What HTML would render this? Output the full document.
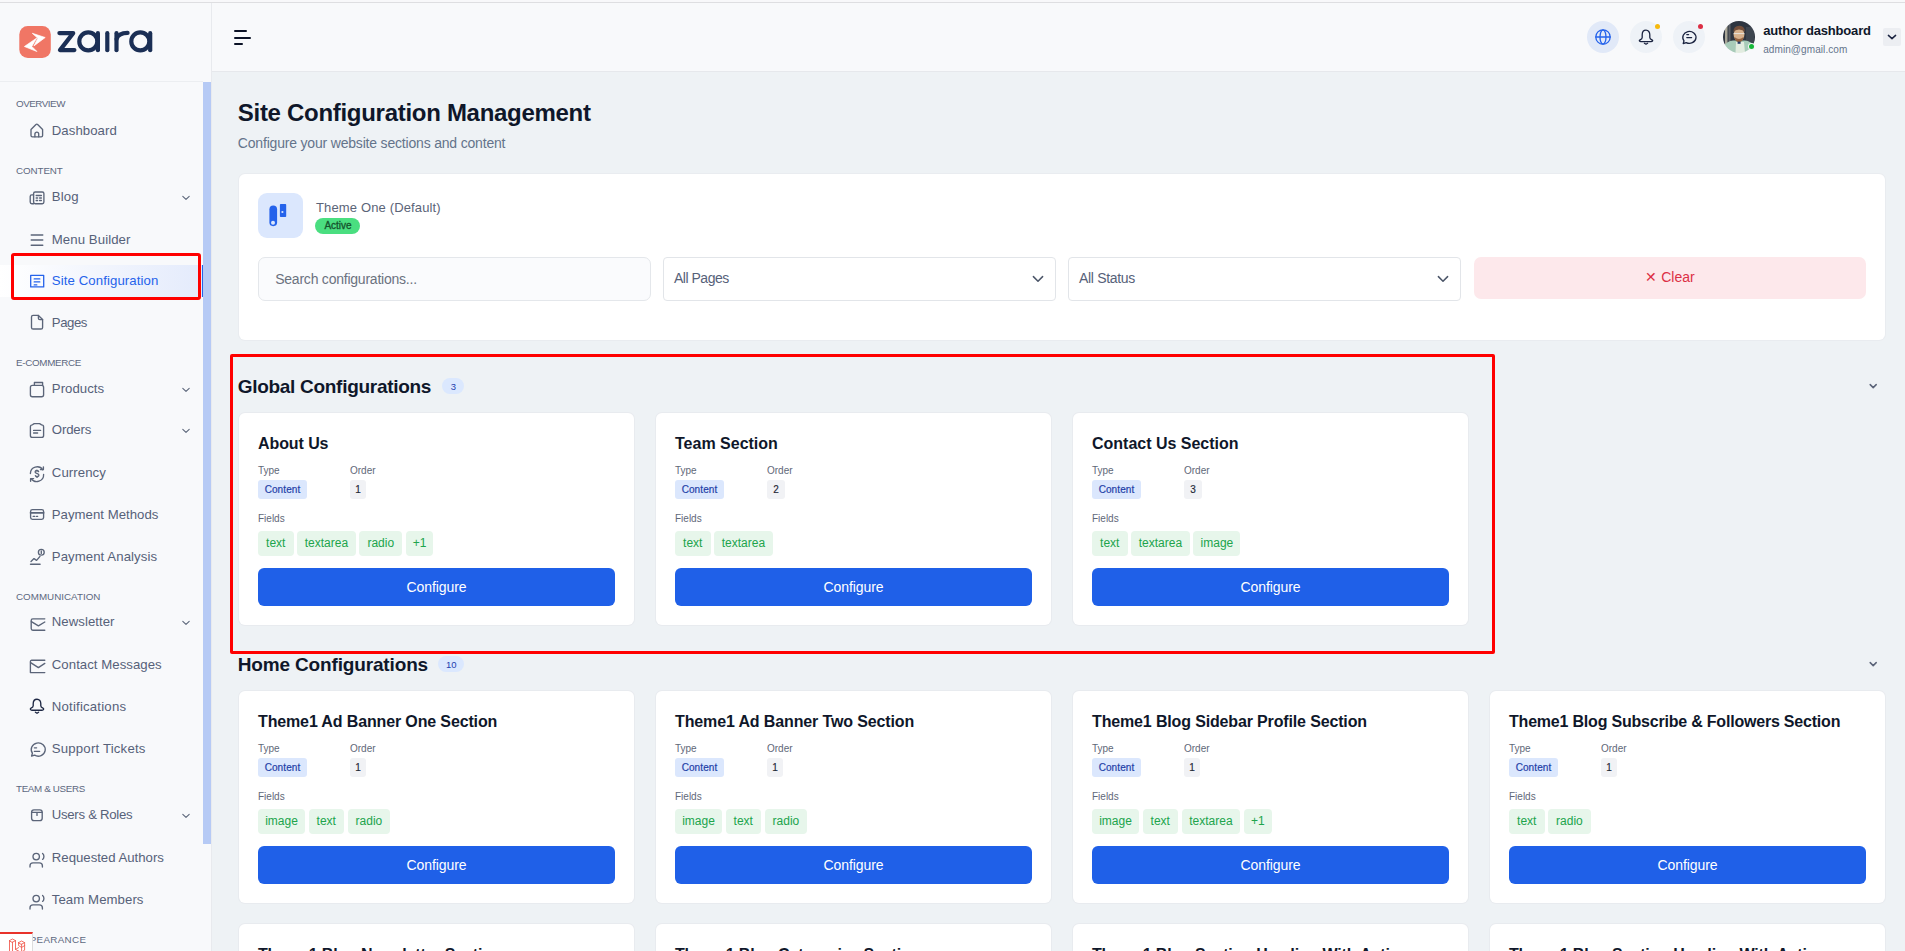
<!DOCTYPE html>
<html><head><meta charset="utf-8"><title>Site Configuration Management</title>
<style>
html,body{margin:0;padding:0;}
body{width:1905px;height:951px;overflow:hidden;position:relative;background:#eef2f5;font-family:"Liberation Sans", sans-serif;}
</style></head><body>
<div style="position:absolute;left:0px;top:0px;width:1905px;height:2px;background:#f8f8fa"></div>
<div style="position:absolute;left:0px;top:2px;width:1905px;height:1px;background:#dedee1"></div>
<div style="position:absolute;left:0px;top:3px;width:211px;height:948px;background:#f8f9fb"></div>
<div style="position:absolute;left:211px;top:3px;width:1px;height:948px;background:#e8eaee"></div>
<div style="position:absolute;left:0px;top:81px;width:203px;height:1px;background:#eceef1"></div>
<div style="position:absolute;left:203px;top:82px;width:8px;height:762px;background:#b6caf5"></div>
<svg style="position:absolute;left:0;top:0" width="170" height="81" viewBox="0 0 170 81">
<rect x="19.3" y="26" width="31.5" height="31.9" rx="8.5" fill="#f07665"/>
<g fill="#fff" stroke="#fff" stroke-width="0.7" stroke-linejoin="round"><path d="M32.3 33.3 L45.2 37.5 L33.9 45.9 L37.8 38.3 Z"/><path d="M36.7 38.1 L24.4 46.5 L36.9 51.5 L31.8 46.4 Z"/></g>
<g fill="none" stroke="#1b2f55" stroke-width="4.2" stroke-linecap="round" stroke-linejoin="round">
<path d="M59.4 33.1 H73.2 L60 50.1 H74.4"/>
<circle cx="88.3" cy="41.4" r="9.0"/>
<path d="M97.9 33.2 V50.2"/>
<path d="M107.3 33.2 V50.2"/>
<path d="M116.5 50.2 V33.2"/>
<path d="M116.6 39 Q118.4 32.9 127.6 32.9"/>
<circle cx="140.3" cy="41.4" r="9.0"/>
<path d="M150.2 33.2 V50.2"/>
</g></svg>
<div style="position:absolute;top:99.0px;font-size:9.8px;line-height:1;font-weight:400;color:#5d6880;white-space:nowrap;letter-spacing:-0.457px;left:16px;">OVERVIEW</div>
<div style="position:absolute;top:166.0px;font-size:9.8px;line-height:1;font-weight:400;color:#5d6880;white-space:nowrap;letter-spacing:-0.083px;left:16px;">CONTENT</div>
<div style="position:absolute;top:358.0px;font-size:9.8px;line-height:1;font-weight:400;color:#5d6880;white-space:nowrap;letter-spacing:-0.3px;left:16px;">E-COMMERCE</div>
<div style="position:absolute;top:592.0px;font-size:9.8px;line-height:1;font-weight:400;color:#5d6880;white-space:nowrap;letter-spacing:0.017px;left:16px;">COMMUNICATION</div>
<div style="position:absolute;top:784.0px;font-size:9.8px;line-height:1;font-weight:400;color:#5d6880;white-space:nowrap;letter-spacing:-0.336px;left:16px;">TEAM &amp; USERS</div>
<div style="position:absolute;top:935.0px;font-size:9.8px;line-height:1;font-weight:400;color:#5d6880;white-space:nowrap;letter-spacing:0.333px;left:16px;">APPEARANCE</div>
<div style="position:absolute;left:0px;top:265px;width:202px;height:32px;background:linear-gradient(90deg,#ffffff 0%,#f3f6fd 45%,#e4ebfc 100%)"></div>
<div style="position:absolute;left:202px;top:265px;width:1px;height:32px;background:#2563eb"></div>
<div style="position:absolute;top:124.0px;font-size:13.2px;line-height:1;font-weight:400;color:#566179;white-space:nowrap;letter-spacing:0.05px;left:51.8px;">Dashboard</div>
<div style="position:absolute;top:190.0px;font-size:13.2px;line-height:1;font-weight:400;color:#566179;white-space:nowrap;letter-spacing:0.1px;left:51.8px;">Blog</div>
<svg style="position:absolute;left:180px;top:195px;overflow:visible" width="12" height="8" viewBox="0 0 12 8"><g fill="none" stroke="#5b6579" stroke-width="1.1" stroke-linecap="round" stroke-linejoin="round"><path d="M2.8 1.4 L6 4.4 L9.2 1.4"/></g></svg>
<div style="position:absolute;top:233.0px;font-size:13.2px;line-height:1;font-weight:400;color:#566179;white-space:nowrap;letter-spacing:0.082px;left:51.8px;">Menu Builder</div>
<div style="position:absolute;top:274.0px;font-size:13.2px;line-height:1;font-weight:400;color:#2563eb;white-space:nowrap;letter-spacing:0.1px;left:51.8px;">Site Configuration</div>
<div style="position:absolute;top:316.0px;font-size:13.2px;line-height:1;font-weight:400;color:#566179;white-space:nowrap;letter-spacing:-0.45px;left:51.8px;">Pages</div>
<div style="position:absolute;top:382.0px;font-size:13.2px;line-height:1;font-weight:400;color:#566179;white-space:nowrap;letter-spacing:0.043px;left:51.8px;">Products</div>
<svg style="position:absolute;left:180px;top:387px;overflow:visible" width="12" height="8" viewBox="0 0 12 8"><g fill="none" stroke="#5b6579" stroke-width="1.1" stroke-linecap="round" stroke-linejoin="round"><path d="M2.8 1.4 L6 4.4 L9.2 1.4"/></g></svg>
<div style="position:absolute;top:423.0px;font-size:13.2px;line-height:1;font-weight:400;color:#566179;white-space:nowrap;letter-spacing:-0.16px;left:51.8px;">Orders</div>
<svg style="position:absolute;left:180px;top:428px;overflow:visible" width="12" height="8" viewBox="0 0 12 8"><g fill="none" stroke="#5b6579" stroke-width="1.1" stroke-linecap="round" stroke-linejoin="round"><path d="M2.8 1.4 L6 4.4 L9.2 1.4"/></g></svg>
<div style="position:absolute;top:466.0px;font-size:13.2px;line-height:1;font-weight:400;color:#566179;white-space:nowrap;letter-spacing:0.071px;left:51.8px;">Currency</div>
<div style="position:absolute;top:508.0px;font-size:13.2px;line-height:1;font-weight:400;color:#566179;white-space:nowrap;letter-spacing:0.021px;left:51.8px;">Payment Methods</div>
<div style="position:absolute;top:550.0px;font-size:13.2px;line-height:1;font-weight:400;color:#566179;white-space:nowrap;letter-spacing:0.073px;left:51.8px;">Payment Analysis</div>
<div style="position:absolute;top:615.0px;font-size:13.2px;line-height:1;font-weight:400;color:#566179;white-space:nowrap;letter-spacing:0.044px;left:51.8px;">Newsletter</div>
<svg style="position:absolute;left:180px;top:620px;overflow:visible" width="12" height="8" viewBox="0 0 12 8"><g fill="none" stroke="#5b6579" stroke-width="1.1" stroke-linecap="round" stroke-linejoin="round"><path d="M2.8 1.4 L6 4.4 L9.2 1.4"/></g></svg>
<div style="position:absolute;top:658.0px;font-size:13.2px;line-height:1;font-weight:400;color:#566179;white-space:nowrap;letter-spacing:0.047px;left:51.8px;">Contact Messages</div>
<div style="position:absolute;top:700.0px;font-size:13.2px;line-height:1;font-weight:400;color:#566179;white-space:nowrap;letter-spacing:0.2px;left:51.8px;">Notifications</div>
<div style="position:absolute;top:742.0px;font-size:13.2px;line-height:1;font-weight:400;color:#566179;white-space:nowrap;letter-spacing:0.193px;left:51.8px;">Support Tickets</div>
<div style="position:absolute;top:808.0px;font-size:13.2px;line-height:1;font-weight:400;color:#566179;white-space:nowrap;letter-spacing:-0.292px;left:51.8px;">Users &amp; Roles</div>
<svg style="position:absolute;left:180px;top:813px;overflow:visible" width="12" height="8" viewBox="0 0 12 8"><g fill="none" stroke="#5b6579" stroke-width="1.1" stroke-linecap="round" stroke-linejoin="round"><path d="M2.8 1.4 L6 4.4 L9.2 1.4"/></g></svg>
<div style="position:absolute;top:851.0px;font-size:13.2px;line-height:1;font-weight:400;color:#566179;white-space:nowrap;letter-spacing:-0.006px;left:51.8px;">Requested Authors</div>
<div style="position:absolute;top:893.0px;font-size:13.2px;line-height:1;font-weight:400;color:#566179;white-space:nowrap;letter-spacing:0.073px;left:51.8px;">Team Members</div>
<svg style="position:absolute;left:26px;top:119px;overflow:visible" width="22" height="22" viewBox="0 0 22 22"><g fill="none" stroke="#5b6579" stroke-width="1.35" stroke-linecap="round" stroke-linejoin="round"><path d="M5 10.4 L9.7 5.7 Q10.8 4.6 11.9 5.7 L16.6 10.4 V16.4 A1.4 1.4 0 0 1 15.2 17.8 H6.4 A1.4 1.4 0 0 1 5 16.4 Z"/><path d="M8.9 17.8 V15 A1.9 1.9 0 0 1 12.7 15 V17.8"/></g></svg>
<svg style="position:absolute;left:26px;top:185px;overflow:visible" width="22" height="22" viewBox="0 0 22 22"><g fill="none" stroke="#5b6579" stroke-width="1.35" stroke-linecap="round" stroke-linejoin="round"><rect x="7.6" y="7" width="10.3" height="11.7" rx="1.6"/><path d="M7.6 18.7 H5.8 A1.6 1.6 0 0 1 4.2 17.1 V11.4 A1.6 1.6 0 0 1 5.8 9.8 H7.6"/><path d="M10.2 10.5 H15.4 M10.2 13 H11.6 M13.6 13 H15.4 M10.2 15.5 H11.6 M13.6 15.5 H15.4"/></g></svg>
<svg style="position:absolute;left:26px;top:228px;overflow:visible" width="22" height="22" viewBox="0 0 22 22"><g fill="none" stroke="#5b6579" stroke-width="1.35" stroke-linecap="round" stroke-linejoin="round"><path d="M5.2 7 H16.8 M5.2 12 H16.8 M5.2 17.2 H16.8"/></g></svg>
<svg style="position:absolute;left:26px;top:269px;overflow:visible" width="22" height="22" viewBox="0 0 22 22"><g fill="none" stroke="#2563eb" stroke-width="1.3" stroke-linecap="round" stroke-linejoin="round"><rect x="4.7" y="6.3" width="13" height="11.6"/><path d="M8.2 9.9 H13.8 M8.2 12.9 H13.8 M8.2 15.9 H10.8"/></g></svg>
<svg style="position:absolute;left:26px;top:311px;overflow:visible" width="22" height="22" viewBox="0 0 22 22"><g fill="none" stroke="#5b6579" stroke-width="1.35" stroke-linecap="round" stroke-linejoin="round"><path d="M7.1 4.4 H12.4 L16.6 8.6 V16.4 A1.6 1.6 0 0 1 15 18 H7.1 A1.6 1.6 0 0 1 5.5 16.4 V6 A1.6 1.6 0 0 1 7.1 4.4 Z"/><path d="M12.4 4.4 V7.2 A1.4 1.4 0 0 0 13.8 8.6 H16.6"/></g></svg>
<svg style="position:absolute;left:26px;top:377px;overflow:visible" width="22" height="22" viewBox="0 0 22 22"><g fill="none" stroke="#5b6579" stroke-width="1.35" stroke-linecap="round" stroke-linejoin="round"><rect x="4.4" y="8.4" width="13.2" height="11.3" rx="2"/><path d="M8.4 8.4 V5.5 H16.6 V8.4"/></g></svg>
<svg style="position:absolute;left:26px;top:418px;overflow:visible" width="22" height="22" viewBox="0 0 22 22"><g fill="none" stroke="#5b6579" stroke-width="1.35" stroke-linecap="round" stroke-linejoin="round"><path d="M8.2 5.6 L6.4 6.8 A2 2 0 0 0 4.4 8.8 V17.4 A2 2 0 0 0 6.4 19.4 H15.6 A2 2 0 0 0 17.6 17.4 V8.8 A2 2 0 0 0 15.6 6.8 L13.6 5.6 Z"/><path d="M7.6 12.4 H14.6 M7.6 15 H11.6"/></g></svg>
<svg style="position:absolute;left:26px;top:461px;overflow:visible" width="22" height="22" viewBox="0 0 22 22"><g fill="none" stroke="#5b6579" stroke-width="1.35" stroke-linecap="round" stroke-linejoin="round"><path d="M4.4 12.6 A6.8 6.8 0 0 1 16.8 8.8"/><path d="M14.4 8.6 H17.4 V5.8" /><path d="M17.6 13.4 A6.8 6.8 0 0 1 5.2 17.6"/><path d="M7.6 17.6 H4.6 V20.2"/><path d="M12.6 10.6 A1.6 1.4 0 0 0 9.2 11.2 C9.2 12.4 12.8 12.4 12.8 14 A1.6 1.4 0 0 1 9.4 14.6 M11 9.2 V10.2 M11 15.2 V16.4"/></g></svg>
<svg style="position:absolute;left:26px;top:503px;overflow:visible" width="22" height="22" viewBox="0 0 22 22"><g fill="none" stroke="#5b6579" stroke-width="1.35" stroke-linecap="round" stroke-linejoin="round"><rect x="4.6" y="6.6" width="13" height="9.8" rx="1.8"/><path d="M4.6 9.8 H17.6" stroke-width="1.8"/><path d="M7.2 13.4 H8.8 M10.6 13.4 H11.6"/></g></svg>
<svg style="position:absolute;left:26px;top:545px;overflow:visible" width="22" height="22" viewBox="0 0 22 22"><g fill="none" stroke="#5b6579" stroke-width="1.35" stroke-linecap="round" stroke-linejoin="round"><path d="M5 16.6 L8 13.6 L10.6 15.4 L14 11.4"/><circle cx="15.3" cy="7.2" r="2.9"/><path d="M15.3 6 V8.4"/><path d="M4.6 19.2 H14" stroke-width="1.6"/></g></svg>
<svg style="position:absolute;left:26px;top:610px;overflow:visible" width="22" height="22" viewBox="0 0 22 22"><g fill="none" stroke="#5b6579" stroke-width="1.35" stroke-linecap="round" stroke-linejoin="round"><path d="M18.8 8.8 H6.8 A1.6 1.6 0 0 0 5.2 10.4 V18.6 A1.6 1.6 0 0 0 6.8 20.2 H18.8"/><path d="M5.4 11.6 L12.4 15.8 L18.8 12"/></g></svg>
<svg style="position:absolute;left:26px;top:653px;overflow:visible" width="22" height="22" viewBox="0 0 22 22"><g fill="none" stroke="#5b6579" stroke-width="1.35" stroke-linecap="round" stroke-linejoin="round"><path d="M18.8 7.2 H5.6 A1.4 1.4 0 0 0 4.4 8.6 V19.6 H18.8"/><path d="M4.6 9.6 L12.4 14.6 L18.8 10.4"/></g></svg>
<svg style="position:absolute;left:26px;top:695px;overflow:visible" width="22" height="22" viewBox="0 0 22 22"><g fill="none" stroke="#1e2844" stroke-width="1.35" stroke-linecap="round" stroke-linejoin="round"><path d="M11 4.2 C8.6 4.2 7.2 6.2 7.2 8.8 V10.8 C7.2 12 6.4 12.6 5 13.2 C3.8 13.8 4.4 15.2 6 15.2 H16 C17.6 15.2 18.2 13.8 17 13.2 C15.6 12.6 14.8 12 14.8 10.8 V8.8 C14.8 6.2 13.4 4.2 11 4.2 Z"/><path d="M9.4 17.2 L11 18.2 L12.6 17.2"/></g></svg>
<svg style="position:absolute;left:26px;top:737px;overflow:visible" width="22" height="22" viewBox="0 0 22 22"><g fill="none" stroke="#5b6579" stroke-width="1.35" stroke-linecap="round" stroke-linejoin="round"><path d="M5.6 19 L6.4 16.2 A7 6.6 0 1 1 8.6 18.2 Z"/><path d="M8.4 10.8 H10.6 M8.4 14.4 H13.6"/></g></svg>
<svg style="position:absolute;left:26px;top:803px;overflow:visible" width="22" height="22" viewBox="0 0 22 22"><g fill="none" stroke="#5b6579" stroke-width="1.35" stroke-linecap="round" stroke-linejoin="round"><rect x="5.6" y="6.8" width="10.6" height="10.8" rx="2.4"/><path d="M5.8 9.4 H16 M11 10 V12.4"/></g></svg>
<svg style="position:absolute;left:26px;top:846px;overflow:visible" width="22" height="22" viewBox="0 0 22 22"><g fill="none" stroke="#5b6579" stroke-width="1.35" stroke-linecap="round" stroke-linejoin="round"><circle cx="10.2" cy="10.6" r="3.2"/><path d="M16.6 7.4 A3.4 3.8 0 0 1 16.6 13.4"/><path d="M4 21 V19.8 A3 3 0 0 1 7 16.8 H13.4 A3 3 0 0 1 16.4 19.8 V21"/></g></svg>
<svg style="position:absolute;left:26px;top:888px;overflow:visible" width="22" height="22" viewBox="0 0 22 22"><g fill="none" stroke="#5b6579" stroke-width="1.35" stroke-linecap="round" stroke-linejoin="round"><circle cx="10.2" cy="10.6" r="3.2"/><path d="M16.6 7.4 A3.4 3.8 0 0 1 16.6 13.4"/><path d="M4 21 V19.8 A3 3 0 0 1 7 16.8 H13.4 A3 3 0 0 1 16.4 19.8 V21"/></g></svg>
<div style="position:absolute;left:0px;top:932px;width:33px;height:19px;background:#fff;border-top:2px solid #e8322a;border-right:1px solid #dddddd;box-sizing:border-box"></div>
<svg style="position:absolute;left:8px;top:937.5px;overflow:visible" width="18" height="18" viewBox="0 0 18 18"><g fill="none" stroke="#f0564a" stroke-width="0.85" stroke-linecap="round" stroke-linejoin="round"><path d="M1.5 2.6 L4.5 1 L7.5 2.6 L4.5 4.2 Z M1.5 2.6 V14 L7.5 17.4 L16.6 12.2 V7.4 M4.5 4.2 V15.6 M7.5 2.6 V11.4 L10.6 9.6 M10.6 4.6 L13.6 3 L16.6 4.6 L13.6 6.2 Z M10.6 4.6 V7.6 L13.6 9.4 L16.6 7.6 V4.6 M13.6 6.2 V16 M7.5 11.4 L13.6 14.6"/></g></svg>
<div style="position:absolute;left:212px;top:3px;width:1693px;height:68px;background:#f8f9fb"></div>
<div style="position:absolute;left:212px;top:71px;width:1693px;height:1px;background:#e6e8ec"></div>
<div style="position:absolute;left:233.5px;top:30px;width:13.5px;height:2px;background:#0b1226;border-radius:1px"></div>
<div style="position:absolute;left:233.5px;top:36.5px;width:17px;height:2px;background:#0b1226;border-radius:1px"></div>
<div style="position:absolute;left:233.5px;top:43px;width:9.5px;height:2px;background:#0b1226;border-radius:1px"></div>
<div style="position:absolute;left:1587px;top:21px;width:32px;height:32px;background:#e1e9f8;border-radius:50%"></div>
<div style="position:absolute;left:1630px;top:21px;width:32px;height:32px;background:#eef2f7;border-radius:50%"></div>
<div style="position:absolute;left:1673px;top:21px;width:32px;height:32px;background:#eef2f7;border-radius:50%"></div>
<svg style="position:absolute;left:1595px;top:29px;overflow:visible" width="16" height="16" viewBox="0 0 16 16"><g fill="none" stroke="#2563eb" stroke-width="1.3" stroke-linecap="round" stroke-linejoin="round"><circle cx="8" cy="8" r="7.2"/><ellipse cx="8" cy="8" rx="3" ry="7.2"/><path d="M0.8 8 H15.2"/></g></svg>
<svg style="position:absolute;left:1638px;top:29px;overflow:visible" width="16" height="16" viewBox="0 0 16 16"><g fill="none" stroke="#1a2340" stroke-width="1.3" stroke-linecap="round" stroke-linejoin="round"><path d="M8 1.2 C5.6 1.2 4.2 3.2 4.2 5.8 V8.4 C4.2 9.6 3.4 10.2 2 10.8 C0.8 11.4 1.4 12.6 3 12.6 H13 C14.6 12.6 15.2 11.4 14 10.8 C12.6 10.2 11.8 9.6 11.8 8.4 V5.8 C11.8 3.2 10.4 1.2 8 1.2 Z"/><path d="M6.4 14.3 L8 15.2 L9.6 14.3"/></g></svg>
<svg style="position:absolute;left:1681px;top:29px;overflow:visible" width="16" height="16" viewBox="0 0 16 16"><g fill="none" stroke="#1a2340" stroke-width="1.3" stroke-linecap="round" stroke-linejoin="round"><path d="M2.2 14.6 L3 11.8 A6.6 6 0 1 1 5.2 13.6 Z"/><path d="M5.8 5.6 H7.6 M5.8 8.6 H10.6"/></g></svg>
<div style="position:absolute;left:1654.5px;top:23.5px;width:5px;height:5px;background:#f6b90d;border-radius:50%"></div>
<div style="position:absolute;left:1698px;top:23.5px;width:5px;height:5px;background:#dc2f45;border-radius:50%"></div>
<svg style="position:absolute;left:1723px;top:21px" width="32" height="32" viewBox="0 0 32 32">
<defs><clipPath id="av"><circle cx="16" cy="16" r="16"/></clipPath>
<filter id="blur"><feGaussianBlur stdDeviation="0.6"/></filter></defs>
<g clip-path="url(#av)"><g filter="url(#blur)">
<rect x="-2" y="-2" width="36" height="36" fill="#2e3640"/>
<rect x="2" y="4" width="2.5" height="22" fill="#a9a698"/>
<rect x="5.5" y="2" width="2" height="24" fill="#5d6166"/>
<rect x="23" y="6" width="8" height="18" fill="#3c4550"/>
<path d="M0 32 L1 25 Q4 20 10 19.5 L22 19.5 Q28 20 31 25 L32 32 Z" fill="#a8cbb9"/>
<path d="M12.5 32 L13 21 L21 21 L22 32 Z" fill="#e2ece0"/>
<ellipse cx="16" cy="13.6" rx="5.4" ry="6.6" fill="#d6b18d"/>
<path d="M10.4 11 Q10.6 4.6 16.6 4.8 Q22 5 21.8 11 Q20 8.6 16 8.4 Q12.4 8.4 10.4 11 Z" fill="#74503a"/>
<path d="M11.4 16 Q12 21 16 21.2 Q20 21 20.6 16 Q18 18 16 18 Q14 18 11.4 16 Z" fill="#94623f"/>
<path d="M10.6 12.6 H21.4" stroke="#e8e4dc" stroke-width="1"/>
<rect x="14.6" y="20.6" width="3" height="2.2" fill="#243a66"/>
</g></g></svg>
<div style="position:absolute;left:1748.9px;top:44.4px;width:5px;height:5px;background:#16b83a;border-radius:50%;box-shadow:0 0 0 1px #f1f6f3"></div>
<div style="position:absolute;top:24.0px;font-size:13px;line-height:1;font-weight:700;color:#0f172a;white-space:nowrap;letter-spacing:-0.18px;left:1763.2px;">author dashboard</div>
<div style="position:absolute;top:45.0px;font-size:10px;line-height:1;font-weight:400;color:#64748b;white-space:nowrap;letter-spacing:0.086px;left:1763.2px;">admin@gmail.com</div>
<div style="position:absolute;left:1883px;top:28px;width:18px;height:18px;background:#eceef2;border-radius:2px"></div>
<svg style="position:absolute;left:1883px;top:28px;overflow:visible" width="18" height="18" viewBox="0 0 18 18"><g fill="none" stroke="#1a2340" stroke-width="1.5" stroke-linecap="round" stroke-linejoin="round"><path d="M5.4 7.4 L9 10.6 L12.6 7.4"/></g></svg>
<div style="position:absolute;top:101.0px;font-size:24px;line-height:1;font-weight:700;color:#0f172a;white-space:nowrap;letter-spacing:-0.293px;left:237.8px;">Site Configuration Management</div>
<div style="position:absolute;top:136.0px;font-size:14px;line-height:1;font-weight:400;color:#64748b;white-space:nowrap;letter-spacing:-0.186px;left:237.8px;">Configure your website sections and content</div>
<div style="position:absolute;left:239px;top:174px;width:1646px;height:166px;background:#fff;border-radius:6px;box-shadow:0 0 0 1px #e9ecf0"></div>
<div style="position:absolute;left:258px;top:193px;width:45px;height:45px;background:#dbe7fd;border-radius:9px"></div>
<svg style="position:absolute;left:258px;top:193px" width="45" height="45" viewBox="0 0 45 45"><rect x="11.4" y="12.5" width="7.7" height="20.7" rx="3.85" fill="#2563eb"/><circle cx="15" cy="29.8" r="2" fill="#dbe7fd"/><rect x="21.9" y="10.9" width="6.3" height="13.1" rx="0.8" fill="#2563eb"/><circle cx="24.4" cy="19" r="1.1" fill="#dbe7fd"/></svg>
<div style="position:absolute;top:201.0px;font-size:13px;line-height:1;font-weight:400;color:#5b6478;white-space:nowrap;letter-spacing:0.144px;left:316px;">Theme One (Default)</div>
<div style="position:absolute;left:315px;top:218px;width:45px;height:16px;background:#4ade80;border-radius:8px"></div>
<div style="position:absolute;top:221.0px;font-size:10px;line-height:1;font-weight:400;color:#14532d;white-space:nowrap;left:315.5px;width:45px;text-align:center;-webkit-text-stroke:0.3px #14532d;">Active</div>
<div style="position:absolute;left:258px;top:257px;width:393px;height:44px;background:#fafbfd;border:1px solid #e4e7eb;border-radius:7px;box-sizing:border-box"></div>
<div style="position:absolute;top:272.0px;font-size:14px;line-height:1;font-weight:400;color:#6b7280;white-space:nowrap;letter-spacing:-0.226px;left:275.2px;">Search configurations...</div>
<div style="position:absolute;left:663px;top:257px;width:393px;height:44px;background:#fff;border:1px solid #e2e5e9;border-radius:4px;box-sizing:border-box"></div>
<div style="position:absolute;top:271.0px;font-size:14px;line-height:1;font-weight:400;color:#566179;white-space:nowrap;letter-spacing:-0.487px;left:674px;">All Pages</div>
<svg style="position:absolute;left:1031px;top:272px;overflow:visible" width="14" height="14" viewBox="0 0 14 14"><g fill="none" stroke="#4b5568" stroke-width="1.5" stroke-linecap="round" stroke-linejoin="round"><path d="M2.4 4.6 L7 9.2 L11.6 4.6"/></g></svg>
<div style="position:absolute;left:1068px;top:257px;width:393px;height:44px;background:#fff;border:1px solid #e2e5e9;border-radius:4px;box-sizing:border-box"></div>
<div style="position:absolute;top:271.0px;font-size:14px;line-height:1;font-weight:400;color:#566179;white-space:nowrap;letter-spacing:-0.311px;left:1079px;">All Status</div>
<svg style="position:absolute;left:1436px;top:272px;overflow:visible" width="14" height="14" viewBox="0 0 14 14"><g fill="none" stroke="#4b5568" stroke-width="1.5" stroke-linecap="round" stroke-linejoin="round"><path d="M2.4 4.6 L7 9.2 L11.6 4.6"/></g></svg>
<div style="position:absolute;left:1474px;top:257px;width:392px;height:42px;background:#fde8eb;border-radius:7px"></div>
<div style="position:absolute;top:270.0px;font-size:14px;line-height:1;font-weight:400;color:#dc2f45;white-space:nowrap;left:1610.0px;width:120px;text-align:center;">✕ Clear</div>
<div style="position:absolute;top:377.0px;font-size:19px;line-height:1;font-weight:700;color:#0f172a;white-space:nowrap;letter-spacing:-0.29px;left:237.7px;">Global Configurations</div>
<div style="position:absolute;left:442px;top:378px;width:22px;height:16px;background:#dbe8fe;border-radius:8px"></div>
<div style="position:absolute;top:382.0px;font-size:9.5px;line-height:1;font-weight:400;color:#1e40af;white-space:nowrap;left:442.3px;width:22px;text-align:center;">3</div>
<svg style="position:absolute;left:1866px;top:382px;overflow:visible" width="14" height="10" viewBox="0 0 14 10"><g fill="none" stroke="#5a6378" stroke-width="1.5" stroke-linecap="round" stroke-linejoin="round"><path d="M4.2 2.6 L7.2 5.6 L10.2 2.6"/></g></svg>
<div style="position:absolute;left:239px;top:413px;width:395px;height:212px;background:#fff;border-radius:6px;box-shadow:0 0 0 1px #e8ebef"></div>
<div style="position:absolute;top:436.0px;font-size:16px;line-height:1;font-weight:700;color:#0f172a;white-space:nowrap;letter-spacing:-0.086px;left:258px;">About Us</div>
<div style="position:absolute;top:466.0px;font-size:10px;line-height:1;font-weight:400;color:#5f6878;white-space:nowrap;left:258px;">Type</div>
<div style="position:absolute;top:466.0px;font-size:10px;line-height:1;font-weight:400;color:#5f6878;white-space:nowrap;left:350px;">Order</div>
<div style="position:absolute;left:258px;top:480px;width:49px;height:18.5px;background:#dbe7fd;border-radius:3px"></div>
<div style="position:absolute;top:485.0px;font-size:10px;line-height:1;font-weight:400;color:#1e3fa8;white-space:nowrap;letter-spacing:0.1px;left:258.0px;width:49px;text-align:center;-webkit-text-stroke:0.2px #1e3fa8;">Content</div>
<div style="position:absolute;left:350px;top:480px;width:16px;height:18.5px;background:#f1f2f5;border-radius:3px"></div>
<div style="position:absolute;top:485.0px;font-size:10px;line-height:1;font-weight:400;color:#1f2937;white-space:nowrap;left:350.0px;width:16px;text-align:center;-webkit-text-stroke:0.15px #1f2937;">1</div>
<div style="position:absolute;top:514.0px;font-size:10px;line-height:1;font-weight:400;color:#5f6878;white-space:nowrap;left:258px;">Fields</div>
<div style="position:absolute;left:258px;top:531px;width:35.5px;height:24.7px;background:#e7f6eb;border-radius:4px"></div>
<div style="position:absolute;top:537.0px;font-size:12px;line-height:1;font-weight:400;color:#20a44c;white-space:nowrap;left:258.0px;width:35.5px;text-align:center;">text</div>
<div style="position:absolute;left:297.0px;top:531px;width:58.9px;height:24.7px;background:#e7f6eb;border-radius:4px"></div>
<div style="position:absolute;top:537.0px;font-size:12px;line-height:1;font-weight:400;color:#20a44c;white-space:nowrap;left:297.0px;width:58.9px;text-align:center;">textarea</div>
<div style="position:absolute;left:359.4px;top:531px;width:42.8px;height:24.7px;background:#e7f6eb;border-radius:4px"></div>
<div style="position:absolute;top:537.0px;font-size:12px;line-height:1;font-weight:400;color:#20a44c;white-space:nowrap;left:359.4px;width:42.8px;text-align:center;">radio</div>
<div style="position:absolute;left:405.7px;top:531px;width:27.7px;height:24.7px;background:#e7f6eb;border-radius:4px"></div>
<div style="position:absolute;top:537.0px;font-size:12px;line-height:1;font-weight:400;color:#20a44c;white-space:nowrap;left:405.7px;width:27.7px;text-align:center;">+1</div>
<div style="position:absolute;left:258px;top:568px;width:357px;height:38px;background:#1f60e8;border-radius:6px"></div>
<div style="position:absolute;top:579.5px;font-size:14px;line-height:1;font-weight:400;color:#ffffff;white-space:nowrap;letter-spacing:-0.1px;left:336.5px;width:200px;text-align:center;">Configure</div>
<div style="position:absolute;left:656px;top:413px;width:395px;height:212px;background:#fff;border-radius:6px;box-shadow:0 0 0 1px #e8ebef"></div>
<div style="position:absolute;top:436.0px;font-size:16px;line-height:1;font-weight:700;color:#0f172a;white-space:nowrap;left:675px;">Team Section</div>
<div style="position:absolute;top:466.0px;font-size:10px;line-height:1;font-weight:400;color:#5f6878;white-space:nowrap;left:675px;">Type</div>
<div style="position:absolute;top:466.0px;font-size:10px;line-height:1;font-weight:400;color:#5f6878;white-space:nowrap;left:767px;">Order</div>
<div style="position:absolute;left:675px;top:480px;width:49px;height:18.5px;background:#dbe7fd;border-radius:3px"></div>
<div style="position:absolute;top:485.0px;font-size:10px;line-height:1;font-weight:400;color:#1e3fa8;white-space:nowrap;letter-spacing:0.1px;left:675.0px;width:49px;text-align:center;-webkit-text-stroke:0.2px #1e3fa8;">Content</div>
<div style="position:absolute;left:767px;top:480px;width:18px;height:18.5px;background:#f1f2f5;border-radius:3px"></div>
<div style="position:absolute;top:485.0px;font-size:10px;line-height:1;font-weight:400;color:#1f2937;white-space:nowrap;left:767.0px;width:18px;text-align:center;-webkit-text-stroke:0.15px #1f2937;">2</div>
<div style="position:absolute;top:514.0px;font-size:10px;line-height:1;font-weight:400;color:#5f6878;white-space:nowrap;left:675px;">Fields</div>
<div style="position:absolute;left:675px;top:531px;width:35.5px;height:24.7px;background:#e7f6eb;border-radius:4px"></div>
<div style="position:absolute;top:537.0px;font-size:12px;line-height:1;font-weight:400;color:#20a44c;white-space:nowrap;left:675.0px;width:35.5px;text-align:center;">text</div>
<div style="position:absolute;left:714.0px;top:531px;width:58.9px;height:24.7px;background:#e7f6eb;border-radius:4px"></div>
<div style="position:absolute;top:537.0px;font-size:12px;line-height:1;font-weight:400;color:#20a44c;white-space:nowrap;left:714.0px;width:58.9px;text-align:center;">textarea</div>
<div style="position:absolute;left:675px;top:568px;width:357px;height:38px;background:#1f60e8;border-radius:6px"></div>
<div style="position:absolute;top:579.5px;font-size:14px;line-height:1;font-weight:400;color:#ffffff;white-space:nowrap;letter-spacing:-0.1px;left:753.5px;width:200px;text-align:center;">Configure</div>
<div style="position:absolute;left:1073px;top:413px;width:395px;height:212px;background:#fff;border-radius:6px;box-shadow:0 0 0 1px #e8ebef"></div>
<div style="position:absolute;top:436.0px;font-size:16px;line-height:1;font-weight:700;color:#0f172a;white-space:nowrap;letter-spacing:-0.012px;left:1092px;">Contact Us Section</div>
<div style="position:absolute;top:466.0px;font-size:10px;line-height:1;font-weight:400;color:#5f6878;white-space:nowrap;left:1092px;">Type</div>
<div style="position:absolute;top:466.0px;font-size:10px;line-height:1;font-weight:400;color:#5f6878;white-space:nowrap;left:1184px;">Order</div>
<div style="position:absolute;left:1092px;top:480px;width:49px;height:18.5px;background:#dbe7fd;border-radius:3px"></div>
<div style="position:absolute;top:485.0px;font-size:10px;line-height:1;font-weight:400;color:#1e3fa8;white-space:nowrap;letter-spacing:0.1px;left:1092.0px;width:49px;text-align:center;-webkit-text-stroke:0.2px #1e3fa8;">Content</div>
<div style="position:absolute;left:1184px;top:480px;width:18px;height:18.5px;background:#f1f2f5;border-radius:3px"></div>
<div style="position:absolute;top:485.0px;font-size:10px;line-height:1;font-weight:400;color:#1f2937;white-space:nowrap;left:1184.0px;width:18px;text-align:center;-webkit-text-stroke:0.15px #1f2937;">3</div>
<div style="position:absolute;top:514.0px;font-size:10px;line-height:1;font-weight:400;color:#5f6878;white-space:nowrap;left:1092px;">Fields</div>
<div style="position:absolute;left:1092px;top:531px;width:35.5px;height:24.7px;background:#e7f6eb;border-radius:4px"></div>
<div style="position:absolute;top:537.0px;font-size:12px;line-height:1;font-weight:400;color:#20a44c;white-space:nowrap;left:1092.0px;width:35.5px;text-align:center;">text</div>
<div style="position:absolute;left:1131.0px;top:531px;width:58.9px;height:24.7px;background:#e7f6eb;border-radius:4px"></div>
<div style="position:absolute;top:537.0px;font-size:12px;line-height:1;font-weight:400;color:#20a44c;white-space:nowrap;left:1131.0px;width:58.9px;text-align:center;">textarea</div>
<div style="position:absolute;left:1193.4px;top:531px;width:47.0px;height:24.7px;background:#e7f6eb;border-radius:4px"></div>
<div style="position:absolute;top:537.0px;font-size:12px;line-height:1;font-weight:400;color:#20a44c;white-space:nowrap;left:1193.4px;width:47.0px;text-align:center;">image</div>
<div style="position:absolute;left:1092px;top:568px;width:357px;height:38px;background:#1f60e8;border-radius:6px"></div>
<div style="position:absolute;top:579.5px;font-size:14px;line-height:1;font-weight:400;color:#ffffff;white-space:nowrap;letter-spacing:-0.1px;left:1170.5px;width:200px;text-align:center;">Configure</div>
<div style="position:absolute;top:655.0px;font-size:19px;line-height:1;font-weight:700;color:#0f172a;white-space:nowrap;letter-spacing:-0.15px;left:237.7px;">Home Configurations</div>
<div style="position:absolute;left:438px;top:656.3px;width:25.8px;height:15.5px;background:#dbe8fe;border-radius:8px"></div>
<div style="position:absolute;top:660.0px;font-size:9.5px;line-height:1;font-weight:400;color:#1e40af;white-space:nowrap;left:438.3px;width:25.8px;text-align:center;">10</div>
<svg style="position:absolute;left:1866px;top:660px;overflow:visible" width="14" height="10" viewBox="0 0 14 10"><g fill="none" stroke="#5a6378" stroke-width="1.5" stroke-linecap="round" stroke-linejoin="round"><path d="M4.2 2.6 L7.2 5.6 L10.2 2.6"/></g></svg>
<div style="position:absolute;left:239px;top:691.4px;width:395px;height:212px;background:#fff;border-radius:6px;box-shadow:0 0 0 1px #e8ebef"></div>
<div style="position:absolute;top:714.4px;font-size:16px;line-height:1;font-weight:700;color:#0f172a;white-space:nowrap;letter-spacing:-0.137px;left:258px;">Theme1 Ad Banner One Section</div>
<div style="position:absolute;top:744.4px;font-size:10px;line-height:1;font-weight:400;color:#5f6878;white-space:nowrap;left:258px;">Type</div>
<div style="position:absolute;top:744.4px;font-size:10px;line-height:1;font-weight:400;color:#5f6878;white-space:nowrap;left:350px;">Order</div>
<div style="position:absolute;left:258px;top:758.4px;width:49px;height:18.5px;background:#dbe7fd;border-radius:3px"></div>
<div style="position:absolute;top:763.4px;font-size:10px;line-height:1;font-weight:400;color:#1e3fa8;white-space:nowrap;letter-spacing:0.1px;left:258.0px;width:49px;text-align:center;-webkit-text-stroke:0.2px #1e3fa8;">Content</div>
<div style="position:absolute;left:350px;top:758.4px;width:16px;height:18.5px;background:#f1f2f5;border-radius:3px"></div>
<div style="position:absolute;top:763.4px;font-size:10px;line-height:1;font-weight:400;color:#1f2937;white-space:nowrap;left:350.0px;width:16px;text-align:center;-webkit-text-stroke:0.15px #1f2937;">1</div>
<div style="position:absolute;top:792.4px;font-size:10px;line-height:1;font-weight:400;color:#5f6878;white-space:nowrap;left:258px;">Fields</div>
<div style="position:absolute;left:258px;top:809.4px;width:47.0px;height:24.7px;background:#e7f6eb;border-radius:4px"></div>
<div style="position:absolute;top:815.4px;font-size:12px;line-height:1;font-weight:400;color:#20a44c;white-space:nowrap;left:258.0px;width:47.0px;text-align:center;">image</div>
<div style="position:absolute;left:308.5px;top:809.4px;width:35.5px;height:24.7px;background:#e7f6eb;border-radius:4px"></div>
<div style="position:absolute;top:815.4px;font-size:12px;line-height:1;font-weight:400;color:#20a44c;white-space:nowrap;left:308.5px;width:35.5px;text-align:center;">text</div>
<div style="position:absolute;left:347.5px;top:809.4px;width:42.8px;height:24.7px;background:#e7f6eb;border-radius:4px"></div>
<div style="position:absolute;top:815.4px;font-size:12px;line-height:1;font-weight:400;color:#20a44c;white-space:nowrap;left:347.5px;width:42.8px;text-align:center;">radio</div>
<div style="position:absolute;left:258px;top:846.4px;width:357px;height:38px;background:#1f60e8;border-radius:6px"></div>
<div style="position:absolute;top:857.9px;font-size:14px;line-height:1;font-weight:400;color:#ffffff;white-space:nowrap;letter-spacing:-0.1px;left:336.5px;width:200px;text-align:center;">Configure</div>
<div style="position:absolute;left:656px;top:691.4px;width:395px;height:212px;background:#fff;border-radius:6px;box-shadow:0 0 0 1px #e8ebef"></div>
<div style="position:absolute;top:714.4px;font-size:16px;line-height:1;font-weight:700;color:#0f172a;white-space:nowrap;letter-spacing:-0.13px;left:675px;">Theme1 Ad Banner Two Section</div>
<div style="position:absolute;top:744.4px;font-size:10px;line-height:1;font-weight:400;color:#5f6878;white-space:nowrap;left:675px;">Type</div>
<div style="position:absolute;top:744.4px;font-size:10px;line-height:1;font-weight:400;color:#5f6878;white-space:nowrap;left:767px;">Order</div>
<div style="position:absolute;left:675px;top:758.4px;width:49px;height:18.5px;background:#dbe7fd;border-radius:3px"></div>
<div style="position:absolute;top:763.4px;font-size:10px;line-height:1;font-weight:400;color:#1e3fa8;white-space:nowrap;letter-spacing:0.1px;left:675.0px;width:49px;text-align:center;-webkit-text-stroke:0.2px #1e3fa8;">Content</div>
<div style="position:absolute;left:767px;top:758.4px;width:16px;height:18.5px;background:#f1f2f5;border-radius:3px"></div>
<div style="position:absolute;top:763.4px;font-size:10px;line-height:1;font-weight:400;color:#1f2937;white-space:nowrap;left:767.0px;width:16px;text-align:center;-webkit-text-stroke:0.15px #1f2937;">1</div>
<div style="position:absolute;top:792.4px;font-size:10px;line-height:1;font-weight:400;color:#5f6878;white-space:nowrap;left:675px;">Fields</div>
<div style="position:absolute;left:675px;top:809.4px;width:47.0px;height:24.7px;background:#e7f6eb;border-radius:4px"></div>
<div style="position:absolute;top:815.4px;font-size:12px;line-height:1;font-weight:400;color:#20a44c;white-space:nowrap;left:675.0px;width:47.0px;text-align:center;">image</div>
<div style="position:absolute;left:725.5px;top:809.4px;width:35.5px;height:24.7px;background:#e7f6eb;border-radius:4px"></div>
<div style="position:absolute;top:815.4px;font-size:12px;line-height:1;font-weight:400;color:#20a44c;white-space:nowrap;left:725.5px;width:35.5px;text-align:center;">text</div>
<div style="position:absolute;left:764.5px;top:809.4px;width:42.8px;height:24.7px;background:#e7f6eb;border-radius:4px"></div>
<div style="position:absolute;top:815.4px;font-size:12px;line-height:1;font-weight:400;color:#20a44c;white-space:nowrap;left:764.5px;width:42.8px;text-align:center;">radio</div>
<div style="position:absolute;left:675px;top:846.4px;width:357px;height:38px;background:#1f60e8;border-radius:6px"></div>
<div style="position:absolute;top:857.9px;font-size:14px;line-height:1;font-weight:400;color:#ffffff;white-space:nowrap;letter-spacing:-0.1px;left:753.5px;width:200px;text-align:center;">Configure</div>
<div style="position:absolute;left:1073px;top:691.4px;width:395px;height:212px;background:#fff;border-radius:6px;box-shadow:0 0 0 1px #e8ebef"></div>
<div style="position:absolute;top:714.4px;font-size:16px;line-height:1;font-weight:700;color:#0f172a;white-space:nowrap;letter-spacing:-0.147px;left:1092px;">Theme1 Blog Sidebar Profile Section</div>
<div style="position:absolute;top:744.4px;font-size:10px;line-height:1;font-weight:400;color:#5f6878;white-space:nowrap;left:1092px;">Type</div>
<div style="position:absolute;top:744.4px;font-size:10px;line-height:1;font-weight:400;color:#5f6878;white-space:nowrap;left:1184px;">Order</div>
<div style="position:absolute;left:1092px;top:758.4px;width:49px;height:18.5px;background:#dbe7fd;border-radius:3px"></div>
<div style="position:absolute;top:763.4px;font-size:10px;line-height:1;font-weight:400;color:#1e3fa8;white-space:nowrap;letter-spacing:0.1px;left:1092.0px;width:49px;text-align:center;-webkit-text-stroke:0.2px #1e3fa8;">Content</div>
<div style="position:absolute;left:1184px;top:758.4px;width:16px;height:18.5px;background:#f1f2f5;border-radius:3px"></div>
<div style="position:absolute;top:763.4px;font-size:10px;line-height:1;font-weight:400;color:#1f2937;white-space:nowrap;left:1184.0px;width:16px;text-align:center;-webkit-text-stroke:0.15px #1f2937;">1</div>
<div style="position:absolute;top:792.4px;font-size:10px;line-height:1;font-weight:400;color:#5f6878;white-space:nowrap;left:1092px;">Fields</div>
<div style="position:absolute;left:1092px;top:809.4px;width:47.0px;height:24.7px;background:#e7f6eb;border-radius:4px"></div>
<div style="position:absolute;top:815.4px;font-size:12px;line-height:1;font-weight:400;color:#20a44c;white-space:nowrap;left:1092.0px;width:47.0px;text-align:center;">image</div>
<div style="position:absolute;left:1142.5px;top:809.4px;width:35.5px;height:24.7px;background:#e7f6eb;border-radius:4px"></div>
<div style="position:absolute;top:815.4px;font-size:12px;line-height:1;font-weight:400;color:#20a44c;white-space:nowrap;left:1142.5px;width:35.5px;text-align:center;">text</div>
<div style="position:absolute;left:1181.5px;top:809.4px;width:58.9px;height:24.7px;background:#e7f6eb;border-radius:4px"></div>
<div style="position:absolute;top:815.4px;font-size:12px;line-height:1;font-weight:400;color:#20a44c;white-space:nowrap;left:1181.5px;width:58.9px;text-align:center;">textarea</div>
<div style="position:absolute;left:1243.9px;top:809.4px;width:27.7px;height:24.7px;background:#e7f6eb;border-radius:4px"></div>
<div style="position:absolute;top:815.4px;font-size:12px;line-height:1;font-weight:400;color:#20a44c;white-space:nowrap;left:1243.9px;width:27.7px;text-align:center;">+1</div>
<div style="position:absolute;left:1092px;top:846.4px;width:357px;height:38px;background:#1f60e8;border-radius:6px"></div>
<div style="position:absolute;top:857.9px;font-size:14px;line-height:1;font-weight:400;color:#ffffff;white-space:nowrap;letter-spacing:-0.1px;left:1170.5px;width:200px;text-align:center;">Configure</div>
<div style="position:absolute;left:1490px;top:691.4px;width:395px;height:212px;background:#fff;border-radius:6px;box-shadow:0 0 0 1px #e8ebef"></div>
<div style="position:absolute;top:714.4px;font-size:16px;line-height:1;font-weight:700;color:#0f172a;white-space:nowrap;letter-spacing:-0.205px;left:1509px;">Theme1 Blog Subscribe &amp; Followers Section</div>
<div style="position:absolute;top:744.4px;font-size:10px;line-height:1;font-weight:400;color:#5f6878;white-space:nowrap;left:1509px;">Type</div>
<div style="position:absolute;top:744.4px;font-size:10px;line-height:1;font-weight:400;color:#5f6878;white-space:nowrap;left:1601px;">Order</div>
<div style="position:absolute;left:1509px;top:758.4px;width:49px;height:18.5px;background:#dbe7fd;border-radius:3px"></div>
<div style="position:absolute;top:763.4px;font-size:10px;line-height:1;font-weight:400;color:#1e3fa8;white-space:nowrap;letter-spacing:0.1px;left:1509.0px;width:49px;text-align:center;-webkit-text-stroke:0.2px #1e3fa8;">Content</div>
<div style="position:absolute;left:1601px;top:758.4px;width:16px;height:18.5px;background:#f1f2f5;border-radius:3px"></div>
<div style="position:absolute;top:763.4px;font-size:10px;line-height:1;font-weight:400;color:#1f2937;white-space:nowrap;left:1601.0px;width:16px;text-align:center;-webkit-text-stroke:0.15px #1f2937;">1</div>
<div style="position:absolute;top:792.4px;font-size:10px;line-height:1;font-weight:400;color:#5f6878;white-space:nowrap;left:1509px;">Fields</div>
<div style="position:absolute;left:1509px;top:809.4px;width:35.5px;height:24.7px;background:#e7f6eb;border-radius:4px"></div>
<div style="position:absolute;top:815.4px;font-size:12px;line-height:1;font-weight:400;color:#20a44c;white-space:nowrap;left:1509.0px;width:35.5px;text-align:center;">text</div>
<div style="position:absolute;left:1548.0px;top:809.4px;width:42.8px;height:24.7px;background:#e7f6eb;border-radius:4px"></div>
<div style="position:absolute;top:815.4px;font-size:12px;line-height:1;font-weight:400;color:#20a44c;white-space:nowrap;left:1548.0px;width:42.8px;text-align:center;">radio</div>
<div style="position:absolute;left:1509px;top:846.4px;width:357px;height:38px;background:#1f60e8;border-radius:6px"></div>
<div style="position:absolute;top:857.9px;font-size:14px;line-height:1;font-weight:400;color:#ffffff;white-space:nowrap;letter-spacing:-0.1px;left:1587.5px;width:200px;text-align:center;">Configure</div>
<div style="position:absolute;left:239px;top:924.2px;width:395px;height:212px;background:#fff;border-radius:6px;box-shadow:0 0 0 1px #e8ebef"></div>
<div style="position:absolute;top:947.2px;font-size:16px;line-height:1;font-weight:700;color:#0f172a;white-space:nowrap;letter-spacing:-0.15px;left:258px;">Theme1 Blog Newsletter Section</div>
<div style="position:absolute;top:977.2px;font-size:10px;line-height:1;font-weight:400;color:#5f6878;white-space:nowrap;left:258px;">Type</div>
<div style="position:absolute;top:977.2px;font-size:10px;line-height:1;font-weight:400;color:#5f6878;white-space:nowrap;left:350px;">Order</div>
<div style="position:absolute;left:258px;top:991.2px;width:49px;height:18.5px;background:#dbe7fd;border-radius:3px"></div>
<div style="position:absolute;top:996.2px;font-size:10px;line-height:1;font-weight:400;color:#1e3fa8;white-space:nowrap;letter-spacing:0.1px;left:258.0px;width:49px;text-align:center;-webkit-text-stroke:0.2px #1e3fa8;">Content</div>
<div style="position:absolute;left:350px;top:991.2px;width:16px;height:18.5px;background:#f1f2f5;border-radius:3px"></div>
<div style="position:absolute;top:996.2px;font-size:10px;line-height:1;font-weight:400;color:#1f2937;white-space:nowrap;left:350.0px;width:16px;text-align:center;-webkit-text-stroke:0.15px #1f2937;">1</div>
<div style="position:absolute;top:1025.2px;font-size:10px;line-height:1;font-weight:400;color:#5f6878;white-space:nowrap;left:258px;">Fields</div>
<div style="position:absolute;left:258px;top:1042.2px;width:47.0px;height:24.7px;background:#e7f6eb;border-radius:4px"></div>
<div style="position:absolute;top:1048.2px;font-size:12px;line-height:1;font-weight:400;color:#20a44c;white-space:nowrap;left:258.0px;width:47.0px;text-align:center;">image</div>
<div style="position:absolute;left:308.5px;top:1042.2px;width:35.5px;height:24.7px;background:#e7f6eb;border-radius:4px"></div>
<div style="position:absolute;top:1048.2px;font-size:12px;line-height:1;font-weight:400;color:#20a44c;white-space:nowrap;left:308.5px;width:35.5px;text-align:center;">text</div>
<div style="position:absolute;left:258px;top:1079.2px;width:357px;height:38px;background:#1f60e8;border-radius:6px"></div>
<div style="position:absolute;top:1090.7px;font-size:14px;line-height:1;font-weight:400;color:#ffffff;white-space:nowrap;letter-spacing:-0.1px;left:336.5px;width:200px;text-align:center;">Configure</div>
<div style="position:absolute;left:656px;top:924.2px;width:395px;height:212px;background:#fff;border-radius:6px;box-shadow:0 0 0 1px #e8ebef"></div>
<div style="position:absolute;top:947.2px;font-size:16px;line-height:1;font-weight:700;color:#0f172a;white-space:nowrap;letter-spacing:-0.15px;left:675px;">Theme1 Blog Categories Section</div>
<div style="position:absolute;top:977.2px;font-size:10px;line-height:1;font-weight:400;color:#5f6878;white-space:nowrap;left:675px;">Type</div>
<div style="position:absolute;top:977.2px;font-size:10px;line-height:1;font-weight:400;color:#5f6878;white-space:nowrap;left:767px;">Order</div>
<div style="position:absolute;left:675px;top:991.2px;width:49px;height:18.5px;background:#dbe7fd;border-radius:3px"></div>
<div style="position:absolute;top:996.2px;font-size:10px;line-height:1;font-weight:400;color:#1e3fa8;white-space:nowrap;letter-spacing:0.1px;left:675.0px;width:49px;text-align:center;-webkit-text-stroke:0.2px #1e3fa8;">Content</div>
<div style="position:absolute;left:767px;top:991.2px;width:16px;height:18.5px;background:#f1f2f5;border-radius:3px"></div>
<div style="position:absolute;top:996.2px;font-size:10px;line-height:1;font-weight:400;color:#1f2937;white-space:nowrap;left:767.0px;width:16px;text-align:center;-webkit-text-stroke:0.15px #1f2937;">1</div>
<div style="position:absolute;top:1025.2px;font-size:10px;line-height:1;font-weight:400;color:#5f6878;white-space:nowrap;left:675px;">Fields</div>
<div style="position:absolute;left:675px;top:1042.2px;width:47.0px;height:24.7px;background:#e7f6eb;border-radius:4px"></div>
<div style="position:absolute;top:1048.2px;font-size:12px;line-height:1;font-weight:400;color:#20a44c;white-space:nowrap;left:675.0px;width:47.0px;text-align:center;">image</div>
<div style="position:absolute;left:725.5px;top:1042.2px;width:35.5px;height:24.7px;background:#e7f6eb;border-radius:4px"></div>
<div style="position:absolute;top:1048.2px;font-size:12px;line-height:1;font-weight:400;color:#20a44c;white-space:nowrap;left:725.5px;width:35.5px;text-align:center;">text</div>
<div style="position:absolute;left:675px;top:1079.2px;width:357px;height:38px;background:#1f60e8;border-radius:6px"></div>
<div style="position:absolute;top:1090.7px;font-size:14px;line-height:1;font-weight:400;color:#ffffff;white-space:nowrap;letter-spacing:-0.1px;left:753.5px;width:200px;text-align:center;">Configure</div>
<div style="position:absolute;left:1073px;top:924.2px;width:395px;height:212px;background:#fff;border-radius:6px;box-shadow:0 0 0 1px #e8ebef"></div>
<div style="position:absolute;top:947.2px;font-size:16px;line-height:1;font-weight:700;color:#0f172a;white-space:nowrap;letter-spacing:-0.15px;left:1092px;">Theme1 Blog Section Heading With Action</div>
<div style="position:absolute;top:977.2px;font-size:10px;line-height:1;font-weight:400;color:#5f6878;white-space:nowrap;left:1092px;">Type</div>
<div style="position:absolute;top:977.2px;font-size:10px;line-height:1;font-weight:400;color:#5f6878;white-space:nowrap;left:1184px;">Order</div>
<div style="position:absolute;left:1092px;top:991.2px;width:49px;height:18.5px;background:#dbe7fd;border-radius:3px"></div>
<div style="position:absolute;top:996.2px;font-size:10px;line-height:1;font-weight:400;color:#1e3fa8;white-space:nowrap;letter-spacing:0.1px;left:1092.0px;width:49px;text-align:center;-webkit-text-stroke:0.2px #1e3fa8;">Content</div>
<div style="position:absolute;left:1184px;top:991.2px;width:16px;height:18.5px;background:#f1f2f5;border-radius:3px"></div>
<div style="position:absolute;top:996.2px;font-size:10px;line-height:1;font-weight:400;color:#1f2937;white-space:nowrap;left:1184.0px;width:16px;text-align:center;-webkit-text-stroke:0.15px #1f2937;">1</div>
<div style="position:absolute;top:1025.2px;font-size:10px;line-height:1;font-weight:400;color:#5f6878;white-space:nowrap;left:1092px;">Fields</div>
<div style="position:absolute;left:1092px;top:1042.2px;width:35.5px;height:24.7px;background:#e7f6eb;border-radius:4px"></div>
<div style="position:absolute;top:1048.2px;font-size:12px;line-height:1;font-weight:400;color:#20a44c;white-space:nowrap;left:1092.0px;width:35.5px;text-align:center;">text</div>
<div style="position:absolute;left:1092px;top:1079.2px;width:357px;height:38px;background:#1f60e8;border-radius:6px"></div>
<div style="position:absolute;top:1090.7px;font-size:14px;line-height:1;font-weight:400;color:#ffffff;white-space:nowrap;letter-spacing:-0.1px;left:1170.5px;width:200px;text-align:center;">Configure</div>
<div style="position:absolute;left:1490px;top:924.2px;width:395px;height:212px;background:#fff;border-radius:6px;box-shadow:0 0 0 1px #e8ebef"></div>
<div style="position:absolute;top:947.2px;font-size:16px;line-height:1;font-weight:700;color:#0f172a;white-space:nowrap;letter-spacing:-0.15px;left:1509px;">Theme1 Blog Section Heading With Action</div>
<div style="position:absolute;top:977.2px;font-size:10px;line-height:1;font-weight:400;color:#5f6878;white-space:nowrap;left:1509px;">Type</div>
<div style="position:absolute;top:977.2px;font-size:10px;line-height:1;font-weight:400;color:#5f6878;white-space:nowrap;left:1601px;">Order</div>
<div style="position:absolute;left:1509px;top:991.2px;width:49px;height:18.5px;background:#dbe7fd;border-radius:3px"></div>
<div style="position:absolute;top:996.2px;font-size:10px;line-height:1;font-weight:400;color:#1e3fa8;white-space:nowrap;letter-spacing:0.1px;left:1509.0px;width:49px;text-align:center;-webkit-text-stroke:0.2px #1e3fa8;">Content</div>
<div style="position:absolute;left:1601px;top:991.2px;width:16px;height:18.5px;background:#f1f2f5;border-radius:3px"></div>
<div style="position:absolute;top:996.2px;font-size:10px;line-height:1;font-weight:400;color:#1f2937;white-space:nowrap;left:1601.0px;width:16px;text-align:center;-webkit-text-stroke:0.15px #1f2937;">1</div>
<div style="position:absolute;top:1025.2px;font-size:10px;line-height:1;font-weight:400;color:#5f6878;white-space:nowrap;left:1509px;">Fields</div>
<div style="position:absolute;left:1509px;top:1042.2px;width:35.5px;height:24.7px;background:#e7f6eb;border-radius:4px"></div>
<div style="position:absolute;top:1048.2px;font-size:12px;line-height:1;font-weight:400;color:#20a44c;white-space:nowrap;left:1509.0px;width:35.5px;text-align:center;">text</div>
<div style="position:absolute;left:1509px;top:1079.2px;width:357px;height:38px;background:#1f60e8;border-radius:6px"></div>
<div style="position:absolute;top:1090.7px;font-size:14px;line-height:1;font-weight:400;color:#ffffff;white-space:nowrap;letter-spacing:-0.1px;left:1587.5px;width:200px;text-align:center;">Configure</div>
<div style="position:absolute;left:11px;top:253px;width:190px;height:47px;border:3px solid #ff0000;border-radius:3px;box-sizing:border-box"></div>
<div style="position:absolute;left:230px;top:354px;width:1265px;height:300px;border:3px solid #ff0000;border-radius:2px;box-sizing:border-box"></div>
</body></html>
